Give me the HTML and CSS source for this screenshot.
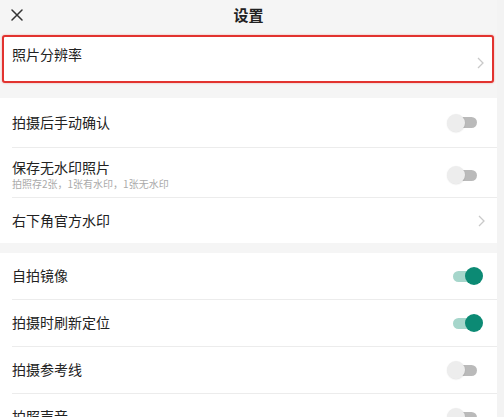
FILE: index.html
```html
<!DOCTYPE html>
<html lang="zh">
<head>
<meta charset="utf-8">
<title>设置</title>
<link rel="stylesheet" href="styles.css">
</head>
<body>
<div class="page">
  <header class="topbar">
    <svg class="close" width="12" height="12" viewBox="0 0 12 12"><path d="M1 1L11 11M11 1L1 11" stroke="#333" stroke-width="1.5" stroke-linecap="round"/></svg>
    <div class="title">设置</div>
  </header>

  <div class="highlight">
    <span class="hl-label">照片分辨率</span>
    <svg class="hl-chev" width="7" height="12" viewBox="0 0 7 12"><path d="M1 1L6 6L1 11" fill="none" stroke="#c9c9c9" stroke-width="1.3"/></svg>
  </div>

  <section class="group group-a">
    <div class="row r50">
      <div class="row-body">
        <span class="label">拍摄后手动确认</span>
        <span class="switch"><span class="track"></span><span class="knob"></span></span>
      </div>
    </div>
    <div class="row r50">
      <div class="row-body">
        <div class="text">
          <span class="label">保存无水印照片</span>
          <span class="sub">拍照存2张，1张有水印，1张无水印</span>
        </div>
        <span class="switch"><span class="track"></span><span class="knob"></span></span>
      </div>
    </div>
    <div class="row r45">
      <div class="row-body last">
        <span class="label">右下角官方水印</span>
        <svg class="chev" width="7" height="12" viewBox="0 0 7 12"><path d="M1 1L6 6L1 11" fill="none" stroke="#c9c9c9" stroke-width="1.3"/></svg>
      </div>
    </div>
  </section>

  <section class="group group-b">
    <div class="row r47">
      <div class="row-body">
        <span class="label">自拍镜像</span>
        <span class="switch on"><span class="track"></span><span class="knob"></span></span>
      </div>
    </div>
    <div class="row r47">
      <div class="row-body">
        <span class="label">拍摄时刷新定位</span>
        <span class="switch on"><span class="track"></span><span class="knob"></span></span>
      </div>
    </div>
    <div class="row r47">
      <div class="row-body">
        <span class="label">拍摄参考线</span>
        <span class="switch"><span class="track"></span><span class="knob"></span></span>
      </div>
    </div>
    <div class="row r47">
      <div class="row-body">
        <span class="label">拍照声音</span>
        <span class="switch"><span class="track"></span><span class="knob"></span></span>
      </div>
    </div>
  </section>
</div>
</body>
</html>
```

FILE: styles.css
```css
html, body {
  margin: 0;
  padding: 0;
  background: #f3f3f3;
  overflow: hidden;
}
body {
  font-family: "Noto Sans CJK SC", "Noto Sans", sans-serif;
  color: #222;
}
.page {
  width: 497px;
  background: #f5f5f5;
  min-height: 417px;
}
.topbar {
  position: relative;
  height: 29px;
  display: flex;
  align-items: center;
  padding-left: 11px;
}
.close {
  display: block;
  margin-top: 1px;
}
.title {
  position: absolute;
  left: 0;
  right: 0;
  top: 0;
  line-height: 29px;
  text-align: center;
  font-size: 15px;
  font-weight: 700;
  color: #222;
  pointer-events: none;
}
.highlight {
  margin: 6px 0 0 2px;
  width: 492px;
  height: 48px;
  box-sizing: border-box;
  border: 2px solid #e2332f;
  border-radius: 3px;
  box-shadow: 0 0 2px rgba(226, 51, 47, 0.45);
  background: #fff;
  display: flex;
  align-items: flex-start;
  padding: 7px 0 0 8px;
}
.hl-label {
  flex: 1;
  font-size: 14px;
  line-height: 20px;
}
.hl-chev {
  display: block;
  flex: none;
  margin: 13px 8px 0 0;
}
.group {
  background: #fff;
}
.group-a {
  margin-top: 15px;
}
.group-b {
  margin-top: 10px;
}
.row {
  padding-left: 12px;
  display: flex;
}
.row-body {
  flex: 1;
  display: flex;
  align-items: center;
  border-bottom: 1px solid #ececec;
  padding-right: 14px;
}
.row-body.last {
  border-bottom: none;
}
.r50 .row-body { height: 49px; }
.r45 .row-body { height: 45px; }
.r47 .row-body { height: 46px; }
.label {
  font-size: 14px;
  line-height: 20px;
  color: #222;
  margin-top: -2px;
}
.text {
  flex: 1;
  display: flex;
  flex-direction: column;
  margin-top: 2px;
}
.text .label { margin-top: 0; }
.text + .switch { margin-top: 5px; }
.row-body > .label {
  flex: 1;
}
.sub {
  font-size: 10px;
  line-height: 14px;
  color: #aaa;
}
.chev {
  display: block;
  flex: none;
  margin-right: -2px;
}
.switch {
  position: relative;
  width: 36px;
  height: 18px;
  flex: none;
}
.track {
  position: absolute;
  left: 6px;
  top: 3.5px;
  width: 24px;
  height: 11px;
  border-radius: 6px;
  background: #bababa;
}
.knob {
  position: absolute;
  left: 0;
  top: 0;
  width: 18px;
  height: 18px;
  border-radius: 50%;
  background: #ededed;
  box-shadow: 0 0.5px 1.5px rgba(0, 0, 0, 0.12);
}
.switch.on .track {
  background: #a6d6cb;
}
.switch.on .knob {
  left: 18px;
  background: #0c8a74;
  box-shadow: none;
}
```
